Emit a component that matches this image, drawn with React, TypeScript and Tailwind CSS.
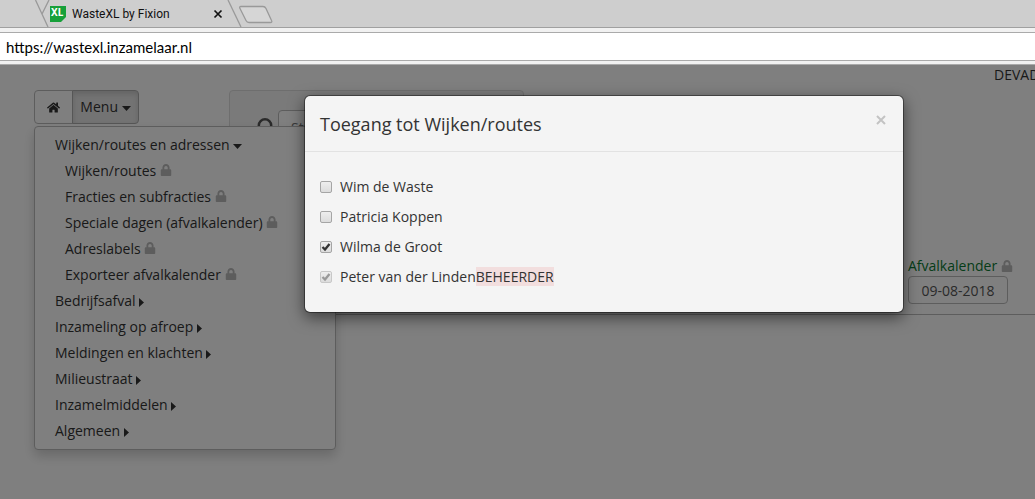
import { FaHome, FaLock } from 'react-icons/fa';

const menu = [
  {
    title: 'Wijken/routes en adressen',
    items: [
      'Wijken/routes',
      'Fracties en subfracties',
      'Speciale dagen (afvalkalender)',
      'Adreslabels',
      'Exporteer afvalkalender',
    ],
  },
  { title: 'Bedrijfsafval' },
  { title: 'Inzameling op afroep' },
  { title: 'Meldingen en klachten' },
  { title: 'Milieustraat' },
  { title: 'Inzamelmiddelen' },
  { title: 'Algemeen' },
];

const users = [
  { id: 'wim', name: 'Wim de Waste', checked: false },
  { id: 'patricia', name: 'Patricia Koppen', checked: false },
  { id: 'wilma', name: 'Wilma de Groot', checked: true },
  { id: 'peter', name: 'Peter van der Linden', checked: true, role: 'BEHEERDER' },
];

function CaretDown() {
  return (
    <svg className="inline-block align-middle" width="9" height="5" viewBox="0 0 9 5" fill="currentColor">
      <path d="M0 0h9L4.500 5z" />
    </svg>
  );
}

function CaretRight() {
  return (
    <svg className="inline-block align-middle" width="5" height="9" viewBox="0 0 5 9" fill="currentColor">
      <path d="M0 0v9l5-4.500z" />
    </svg>
  );
}

function BrowserBar() {
  return (
    <div>
      <div className="flex h-[28px] items-center border-b border-[#a0a0a0] bg-[#cecece] pl-[34px]">
        <svg className="shrink-0" width="16" height="27" fill="none" stroke="#999" strokeWidth="1.3">
          <path d="M1.500 0L14 27M15 0L8 14" />
        </svg>
        <div className="relative size-4 shrink-0">
          <svg width="16" height="16" viewBox="0 0 16 16">
            <path d="M0 0h16v11l-5 5H0z" fill="#17a03a" />
          </svg>
          <span className="absolute top-0 left-px font-['Noto_Sans'] text-[10px] leading-[12px] font-bold text-white">XL</span>
        </div>
        <span className="ml-1.5 w-[141px] font-['Roboto'] text-xs text-[#111]">WasteXL by Fixion</span>
        <button aria-label="Tabblad sluiten" className="shrink-0">
          <svg width="10" height="10" fill="none" stroke="#111" strokeWidth="1.700">
            <path d="M1.500 1.500l7 7M8.500 1.500l-7 7" />
          </svg>
        </button>
        <svg className="ml-1 shrink-0" width="50" height="27" fill="none" stroke="#999" strokeWidth="1.3">
          <path d="M1 0L14 27" />
          <path d="M14 6.500h22q2 0 3 2l5.500 12q1 2-1 2H22q-2 0-3-2L13 8.500q-1-2 1-2z" fill="#d6d6d6" />
        </svg>
      </div>
      <div className="border-b border-[#aaa] bg-[#f1f1f1] pt-1 pb-[3px]">
        <input
          aria-label="Adres"
          defaultValue="https://wastexl.inzamelaar.nl"
          className="block h-[29px] w-full border-y border-[#aaa] bg-white px-1.5 font-['Lato'] text-[15px] text-black outline-none"
        />
      </div>
    </div>
  );
}

function MainMenu() {
  return (
    <ul className="absolute top-9 left-0 z-10 w-[302px] rounded-sm border border-[#bbb] bg-white py-[5px] pl-5 leading-[26px] shadow-[0_6px_12px_rgba(0,0,0,0.18)]">
      {menu.map((group) => (
        <li key={group.title}>
          <a href="#">
            {group.title} {group.items ? <CaretDown /> : <CaretRight />}
          </a>
          {group.items && (
            <ul className="pl-2.5">
              {group.items.map((item) => (
                <li key={item}>
                  <a href="#">
                    {item} <FaLock className="inline-block size-3 align-baseline text-[#bbb]" />
                  </a>
                </li>
              ))}
            </ul>
          )}
        </li>
      ))}
    </ul>
  );
}

function AccessDialog() {
  return (
    <div
      role="dialog"
      aria-labelledby="dialog-title"
      className="w-[600px] rounded-md border border-black/40 bg-[#f4f4f4] bg-clip-padding shadow-[0_5px_15px_rgba(0,0,0,0.5)]"
    >
      <div className="flex h-14 items-center justify-between border-b border-[#e2e2e2] px-[15px]">
        <h4 id="dialog-title" className="text-lg">Toegang tot Wijken/routes</h4>
        <button aria-label="Sluiten" className="mb-2 pr-0.5">
          <svg width="10" height="10" fill="none" stroke="#c3c3c3" strokeWidth="2">
            <path d="M1 1l8 8M9 1L1 9" />
          </svg>
        </button>
      </div>
      <div className="px-[15px] py-5">
        {users.map((user) => (
          <div key={user.id} className="flex h-[30px] items-center">
            <span className="relative mr-2 size-3">
              <input
                type="checkbox"
                id={user.id}
                defaultChecked={user.checked}
                disabled={!!user.role}
                className="peer block size-3 appearance-none rounded-xs border border-[#a5a5a5] bg-linear-to-b from-[#eee] to-[#dcdcdc] disabled:border-[#c8c8c8]"
              />
              <svg
                className="pointer-events-none absolute inset-0 hidden text-[#333] peer-checked:block peer-disabled:text-[#999]"
                width="12"
                height="12"
                fill="none"
                stroke="currentColor"
                strokeWidth="2.300"
              >
                <path d="M2.500 6l2.500 2.500L9.500 3" />
              </svg>
            </span>
            <label htmlFor={user.id}>
              {user.name}
              {user.role && <span className="bg-[#f2dede]">{user.role}</span>}
            </label>
          </div>
        ))}
      </div>
    </div>
  );
}

export default function App() {
  return (
    <div className="flex min-h-screen flex-col overflow-hidden font-['Open_Sans',sans-serif] text-sm text-[#333]">
      <BrowserBar />
      <main className="relative flex-1 bg-white">
        <header className="flex h-[25px] justify-end">
          <span className="w-[41px] overflow-hidden whitespace-nowrap">DEVAD</span>
        </header>

        <div className="ml-[34px] border-b border-[#bbb] pb-2.5">
          <div className="relative flex items-start">
            <div className="flex">
              <button aria-label="Home" className="flex h-[34px] w-[39px] items-center justify-center rounded-l-sm border border-[#bbb]">
                <FaHome className="size-[13px]" />
              </button>
              <button className="-ml-px h-[34px] w-[67px] rounded-r-sm border border-[#adadad] bg-[#e6e6e6] shadow-[inset_0_3px_5px_rgba(0,0,0,0.125)]">
                Menu <CaretDown />
              </button>
            </div>
            <div className="ml-[90px] flex h-[167px] w-[295px] items-start rounded-sm border border-[#dcdcdc] bg-[#f5f5f5] py-[19px] pr-5 pl-[27px]">
              <svg className="mt-2 mr-1 shrink-0 text-[#555]" width="17" height="19" fill="none" stroke="currentColor" strokeWidth="2.500">
                <circle cx="8" cy="7.500" r="6.200" />
                <path d="M12 12l4 5" />
              </svg>
              <input
                aria-label="Straat"
                placeholder="Straat"
                className="h-[34px] w-full rounded-sm border border-[#bbb] bg-white px-3 placeholder:text-[#777]"
              />
            </div>
            <MainMenu />
          </div>

          <div className="flex justify-end pr-[27px]">
            <div className="w-[100px]">
              <label htmlFor="date" className="flex h-[19px] items-start gap-1 whitespace-nowrap text-[#0a7a32]">
                <span className="leading-[18px]">Afvalkalender</span>
                <FaLock className="mt-[3px] size-3 shrink-0 text-[#bbb]" />
              </label>
              <input
                id="date"
                defaultValue="09-08-2018"
                className="block h-7 w-full rounded-sm border border-[#bbb] bg-white text-center text-[#555]"
              />
            </div>
          </div>
        </div>

        <div className="absolute inset-0 z-20 flex items-start bg-black/50 pt-[30px] pl-[304px]">
          <AccessDialog />
        </div>
      </main>
    </div>
  );
}
